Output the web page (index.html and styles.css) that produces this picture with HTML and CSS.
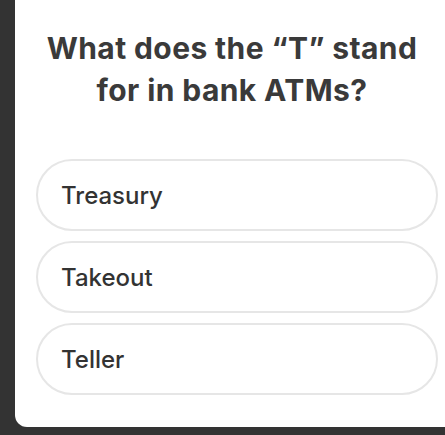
FILE: index.html
```html
<!DOCTYPE html>
<html>
<head>
<meta charset="utf-8">
<link rel="stylesheet" href="styles.css">
</head>
<body>
<div class="card">
  <h1 class="question">What does the “T” stand for in bank ATMs?</h1>
  <div class="options">
    <div class="option">Treasury</div>
    <div class="option">Takeout</div>
    <div class="option">Teller</div>
  </div>
</div>
</body>
</html>
```
FILE: styles.css
```css
html, body {
  margin: 0;
  padding: 0;
}
body {
  background: #333333;
  width: 445px;
  height: 435px;
  overflow: hidden;
  font-family: Inter, "Open Sans", sans-serif;
}
.card {
  margin-left: 15px;
  width: 430px;
  height: 427px;
  box-sizing: border-box;
  background: #ffffff;
  border-bottom-left-radius: 12px;
  padding: 27px 7px 0 21px;
}
.question {
  margin: 0;
  padding-right: 10px;
  text-align: center;
  font-size: 30px;
  line-height: 42px;
  font-weight: 700;
  color: #3a3a3a;
  letter-spacing: 0.4px;
}
.options {
  margin-top: 48px;
  display: flex;
  flex-direction: column;
  gap: 10px;
}
.option {
  height: 72px;
  box-sizing: border-box;
  border: 2px solid #e6e6e6;
  border-radius: 36px;
  display: flex;
  align-items: center;
  padding-left: 23px;
  font-size: 24px;
  font-weight: 500;
  color: #333333;
}
```
